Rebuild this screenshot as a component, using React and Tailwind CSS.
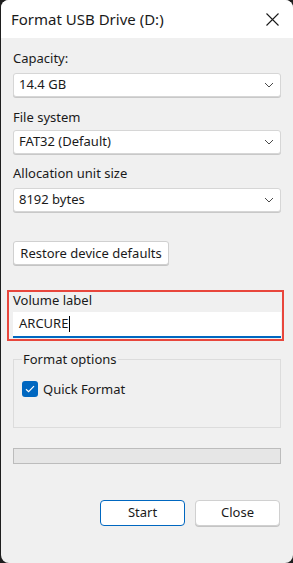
import React from "react";

const Chevron = () => (
  <svg width="10" height="6" viewBox="0 0 10 6" className="text-[#4a4a4a]">
    <path d="M1 1l4 4 4-4" fill="none" stroke="currentColor" strokeWidth="1" />
  </svg>
);

const Select = ({ value, className = "" }) => (
  <div
    className={`flex h-[24px] items-center justify-between rounded-[3px] border border-[#d6d6d6] bg-white pl-[5px] pr-[6px] shadow-[0_1px_0_#c8c8c8] ${className}`}
  >
    <span>{value}</span>
    <Chevron />
  </div>
);

const Label = ({ children, className = "" }) => (
  <div className={`leading-[18px] ${className}`}>{children}</div>
);

const App = () => {
  return (
    <div className="h-[563px] w-[293px] overflow-hidden bg-[#1e1e1e] pl-[1px]">
      <div
        className="flex h-full flex-col overflow-hidden rounded-[8px] bg-[#f0f0f0] text-[13px] text-[#1a1a1a]"
        style={{ fontFamily: '"Noto Sans", "Open Sans", sans-serif' }}
      >
        {/* title bar */}
        <div className="flex h-[38px] shrink-0 items-center justify-between bg-white pl-[10px] pr-[14px]">
          <span className="text-[15px] leading-[20px]">Format USB Drive (D:)</span>
          <svg width="13" height="13" viewBox="0 0 13 13">
            <path d="M0.5 0.5l12 12M12.5 0.5l-12 12" stroke="#1a1a1a" strokeWidth="1.1" />
          </svg>
        </div>

        <div className="flex flex-1 flex-col px-[12px]">
          <Label className="mt-[11px]">Capacity:</Label>
          <Select value="14.4 GB" className="mt-[6px]" />

          <Label className="mt-[11px]">File system</Label>
          <Select value="FAT32 (Default)" className="mt-[4px]" />

          <Label className="mt-[10px]">Allocation unit size</Label>
          <Select value="8192 bytes" className="mt-[6px]" />

          <button className="mt-[29px] h-[24px] w-[156px] rounded-[3px] border border-[#d0d0d0] bg-white text-center leading-[20px] shadow-[0_1px_0_#c4c4c4]">
            Restore device defaults
          </button>

          {/* volume label, marked by the red box */}
          <div className="relative mt-[26px]">
            <div className="pointer-events-none absolute -left-[6px] -right-[3px] -top-[1px] -bottom-[3px] border-2 border-[#e8463c]" />
            <Label>Volume label</Label>
            <div className="mt-[3px] flex h-[26px] items-center border-b-2 border-[#0067c0] bg-white pl-[6px]">
              <span>ARCURE</span>
              <span className="ml-[1px] h-[16px] w-[1px] bg-black" />
            </div>
          </div>

          <fieldset className="mt-[12px] h-[78px] border border-[#dcdcdc] px-[8px]">
            <legend className="px-[1px] leading-[18px]">Format options</legend>
            <label className="mt-[12px] flex items-center gap-[5px]">
              <span className="flex h-[16px] w-[16px] items-center justify-center rounded-[3px] bg-[#0067c0]">
                <svg width="10" height="8" viewBox="0 0 10 8">
                  <path d="M1 4.2l2.6 2.4L9 1.2" fill="none" stroke="white" strokeWidth="1.2" />
                </svg>
              </span>
              <span className="leading-[18px]">Quick Format</span>
            </label>
          </fieldset>

          <div className="mt-[20px] h-[16px] border border-[#bcbcbc] bg-[#e6e6e6]" />

          <div className="mt-[36px] flex justify-end gap-[10px] pr-[1px]">
            <button className="h-[26px] w-[85px] rounded-[4px] border border-[#0067c0] bg-white">
              Start
            </button>
            <button className="h-[26px] w-[85px] rounded-[4px] border border-[#d0d0d0] bg-white shadow-[0_1px_0_#c4c4c4]">
              Close
            </button>
          </div>
        </div>
      </div>
    </div>
  );
};

export default App;
